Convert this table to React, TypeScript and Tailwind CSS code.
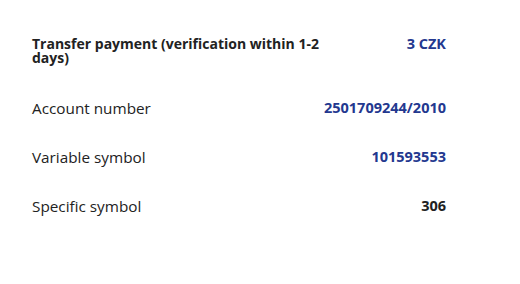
import React from 'react';

const rows = [
  { label: 'Account number', value: '2501709244/2010', blue: true },
  { label: 'Variable symbol', value: '101593553', blue: true },
  { label: 'Specific symbol', value: '306', blue: false },
];

const App = () => {
  return (
    <div className="w-[520px] h-[284px] bg-white text-[#222] font-['Open_Sans',sans-serif]">
      <div className="w-[446px] pl-8 pt-[37px] flex flex-col gap-[29px]">
        <div className="flex justify-between items-start mb-[4px]">
          <div className="w-[300px] text-[14px] leading-[14px] font-bold">
            Transfer payment (verification within 1-2 days)
          </div>
          <div className="text-[14.5px] leading-[14px] font-bold text-[#23388f]">3 CZK</div>
        </div>
        {rows.map((r) => (
          <div key={r.label} className="flex justify-between items-center leading-[20px]">
            <span className="text-[15.3px]">{r.label}</span>
            <span className={r.blue ? 'text-[14.5px] font-bold text-[#23388f]' : 'text-[14.5px] font-bold text-[#222]'}>
              {r.value}
            </span>
          </div>
        ))}
      </div>
    </div>
  );
};

export default App;
